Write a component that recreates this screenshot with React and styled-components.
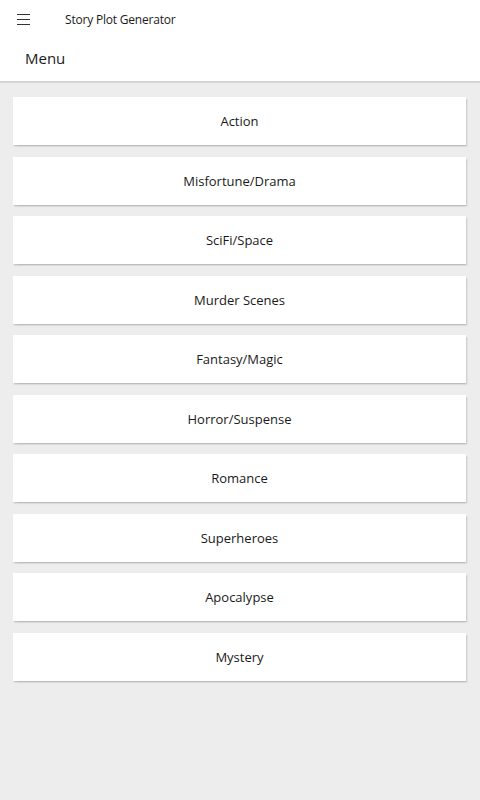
import styled, { createGlobalStyle } from "styled-components";

const GlobalStyle = createGlobalStyle`
  html, body {
    margin: 0;
    padding: 0;
    background: #ededed;
    font-family: "Open Sans", "Noto Sans", sans-serif;
  }
`;

const genres = [
  "Action",
  "Misfortune/Drama",
  "SciFi/Space",
  "Murder Scenes",
  "Fantasy/Magic",
  "Horror/Suspense",
  "Romance",
  "Superheroes",
  "Apocalypse",
  "Mystery",
];

const Page = styled.div`
  min-height: 800px;
  background: #ededed;
`;

const Header = styled.header`
  background: #ffffff;
  height: 81px;
  border-bottom: 2px solid #d5d5d5;
  box-sizing: content-box;
`;

const TitleBar = styled.div`
  display: flex;
  align-items: center;
  height: 38px;
  padding-left: 17px;
`;

const MenuButton = styled.div`
  width: 13px;
  display: flex;
  flex-direction: column;
  gap: 4px;

  span {
    display: block;
    height: 1px;
    background: #333;
  }
`;

const AppTitle = styled.div`
  margin-left: 35px;
  font-size: 12px;
  color: #1a1a1a;
  letter-spacing: -0.2px;
`;

const PageTitle = styled.div`
  padding-left: 25px;
  padding-top: 10px;
  font-size: 15px;
  color: #1a1a1a;
`;

const List = styled.div`
  display: flex;
  flex-direction: column;
  gap: 11.5px;
  padding: 14px 14px 0 13px;
`;

const Card = styled.button`
  height: 48px;
  border: none;
  background: #ffffff;
  box-shadow: 1px 1.5px 1.5px rgba(0, 0, 0, 0.2);
  font-family: inherit;
  font-size: 13px;
  color: #1a1a1a;
  cursor: pointer;
  padding: 0;
`;

export default function App() {
  return (
    <Page>
      <GlobalStyle />
      <Header>
        <TitleBar>
          <MenuButton>
            <span />
            <span />
            <span />
          </MenuButton>
          <AppTitle>Story Plot Generator</AppTitle>
        </TitleBar>
        <PageTitle>Menu</PageTitle>
      </Header>
      <List>
        {genres.map((g) => (
          <Card key={g}>{g}</Card>
        ))}
      </List>
    </Page>
  );
}
